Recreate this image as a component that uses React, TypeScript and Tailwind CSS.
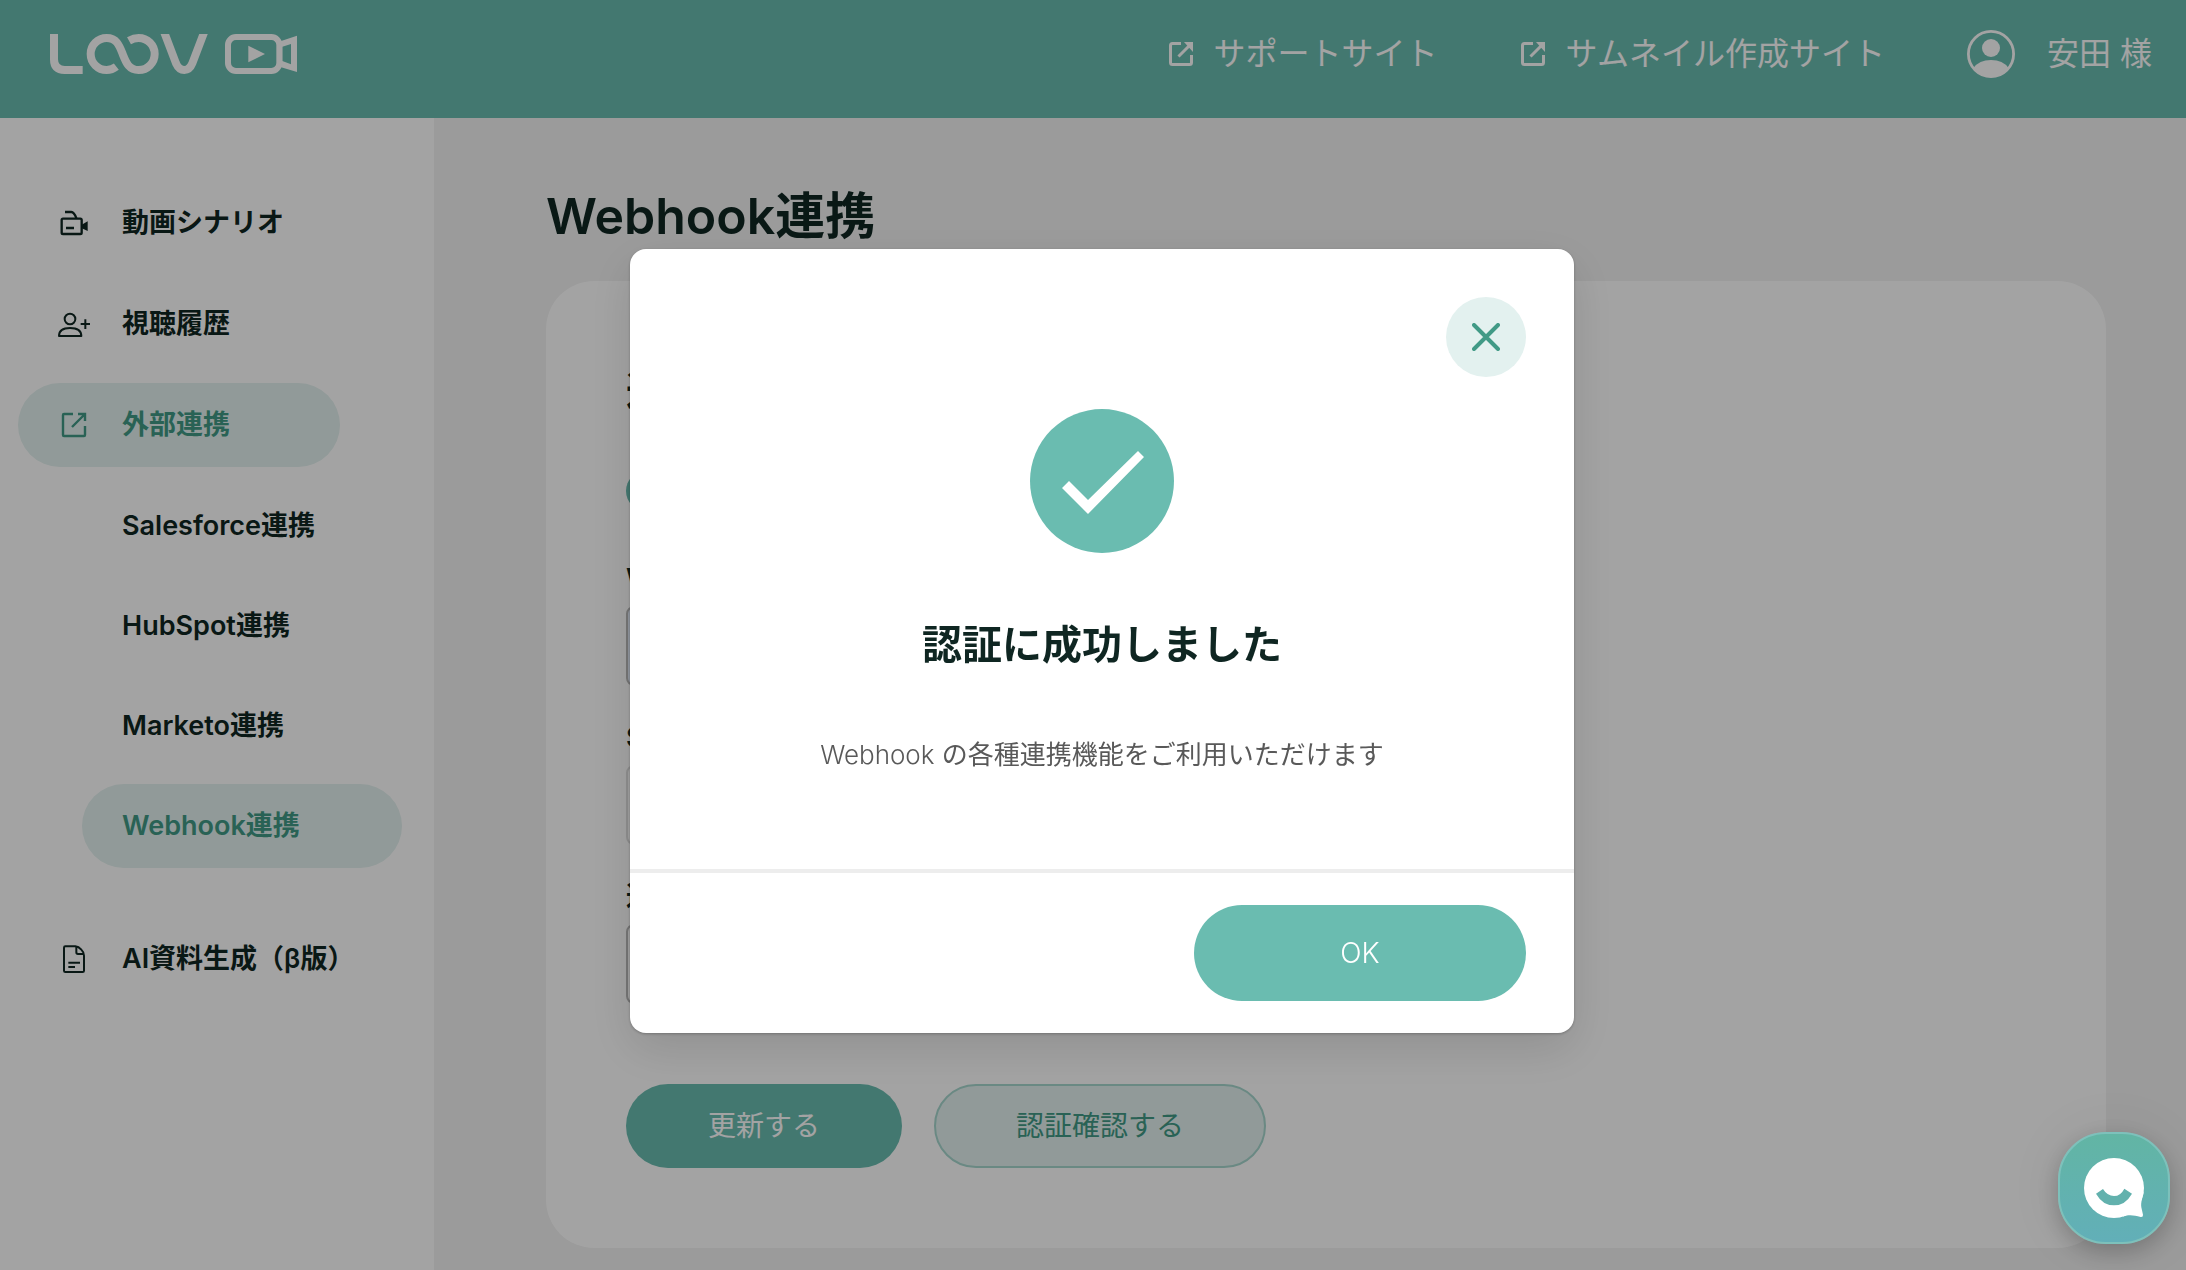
import { ReactNode } from "react"

const subItems = [
  { label: "Salesforce連携", active: false },
  { label: "HubSpot連携", active: false },
  { label: "Marketo連携", active: false },
  { label: "Webhook連携", active: true },
]

function Logo() {
  return (
    <svg viewBox="150 102 741 120" className="w-[247px] h-10" fill="none" stroke="white" strokeWidth="24" role="img" aria-label="LOOV">
      <path d="M162 98V178Q162 210 194 210H248" />
      <path d="M349 200C340 207 330 210 320 210A48 48 0 0 1 320 114C350 114 358 137 368 162C378 187 386 210 416 210A48 48 0 0 0 416 114C405 114 396 117 387 122" />
      <path d="M493 98L528 190Q537 210 553 210Q569 210 577 190L612 98" />
      <rect x="684" y="111" width="154" height="102" rx="24" strokeWidth="18" />
      <path d="M745 137L795 162L745 187Z" fill="white" stroke="none" />
      <path fillRule="evenodd" d="M841 124L891 107V216L841 201ZM847 140V183L873 193V132Z" fill="white" stroke="none" />
    </svg>
  )
}

function SiteLinkIcon() {
  return (
    <svg viewBox="-3 -4 32 32" className="w-8 h-8 shrink-0" fill="none" stroke="currentColor" strokeWidth="3">
      <path d="M12 1.5H3.5Q1.5 1.5 1.5 3.5V20.5Q1.5 22.5 3.5 22.5H20.5Q22.5 22.5 22.5 20.5V13" />
      <path d="M9.5 14.5L20 4" />
      <path d="M15 0H24V10Z" fill="currentColor" stroke="none" />
    </svg>
  )
}

function VideoIcon() {
  return (
    <svg viewBox="0 0 96 96" className="w-8 h-8 shrink-0" fill="none" stroke="currentColor" strokeWidth="7">
      <rect x="11" y="35" width="60" height="46" rx="4" />
      <path d="M21 15H40Q44 15 47 19Q53 26 55 34M24 63H48" />
      <path d="M70 54L89 43V72L70 63Z" fill="currentColor" stroke="none" />
    </svg>
  )
}

function ViewerIcon() {
  return (
    <svg viewBox="0 0 96 96" className="w-8 h-8 shrink-0" fill="none" stroke="currentColor" strokeWidth="6">
      <circle cx="36" cy="33" r="16" />
      <path d="M3 84Q3 60 36 60Q70 60 70 84Z" strokeLinejoin="round" />
      <path d="M82 34V63M68 48H96" />
    </svg>
  )
}

function ExternalIcon() {
  return (
    <svg viewBox="-4 -4 32 32" className="w-8 h-8 shrink-0" fill="none" stroke="currentColor" strokeWidth="2.4">
      <path d="M11 1H2Q1 1 1 2V22Q1 23 2 23H22Q23 23 23 22V13" />
      <path d="M16 1H23V8M10 14L23 1" />
    </svg>
  )
}

function DocumentIcon() {
  return (
    <svg viewBox="0 0 96 96" className="w-8 h-8 shrink-0" fill="none" stroke="currentColor" strokeWidth="6">
      <path d="M22 10H52Q62 11 70 20Q78 28 78 38V83Q78 87 74 87H22Q18 87 18 83V14Q18 10 22 10Z" />
      <path d="M55 11V28Q55 33 60 33H77M31 59H66M31 72H51" />
    </svg>
  )
}

function NavItem({ icon, label, active }: { icon: ReactNode; label: string; active?: boolean }) {
  return (
    <a
      href="#"
      className={`flex items-center gap-8 h-21 w-[322px] pl-10 rounded-full whitespace-nowrap ${
        active ? "bg-[#e3f1ef] text-[#419a86]" : ""
      }`}
    >
      {icon}
      {label}
    </a>
  )
}

function Field({ id, label, value, className }: { id: string; label: string; value?: string; className: string }) {
  return (
    <div>
      <label htmlFor={id} className="block mb-[7px] text-[27px] leading-10 font-semibold">
        {label}
      </label>
      <input id={id} defaultValue={value} className={`block w-[860px] h-20 px-6 text-[26px] rounded-lg border-2 ${className}`} />
    </div>
  )
}

function SuccessModal() {
  return (
    <div className="fixed inset-0 z-10 flex items-center justify-center pl-[18px] pt-3 bg-black/36">
      <div
        role="dialog"
        aria-modal="true"
        aria-labelledby="modal-title"
        className="w-[944px] rounded-2xl bg-white shadow-[0_1px_3px_rgba(0,0,0,0.25),0_16px_48px_rgba(0,0,0,0.12)]"
      >
        <div className="flex flex-col items-center px-12 pt-12 pb-[94px]">
          <button aria-label="閉じる" className="self-end w-20 h-20 rounded-full bg-[#e3f1ef] flex items-center justify-center">
            <svg viewBox="0 0 28 28" className="w-7 h-7" stroke="#419a86" strokeWidth="4" strokeLinecap="round">
              <path d="M2 2L26 26M26 2L2 26" />
            </svg>
          </button>
          <svg viewBox="0 0 144 144" className="mt-8 w-36 h-36">
            <circle cx="72" cy="72" r="72" fill="#6abcb0" />
            <path d="M32 79L39 72L58 91L108 42L114 48L58 105Z" fill="white" />
          </svg>
          <h2 id="modal-title" className="mt-16 text-[40px] leading-14 font-bold">
            認証に成功しました
          </h2>
          <p className="mt-[62px] text-[26px] leading-10 text-[#595959]">
            <span className="font-light">Webhook</span> の各種連携機能をご利用いただけます
          </p>
        </div>
        <div className="flex justify-end border-t-4 border-[#ededed] pt-8 pb-8 pr-12">
          <button className="w-[332px] h-24 rounded-full bg-[#6abcb0] text-white text-[28px] font-light">OK</button>
        </div>
      </div>
    </div>
  )
}

function ChatButton() {
  return (
    <button
      aria-label="チャット"
      className="fixed right-4 bottom-[26px] z-20 w-28 h-28 rounded-[48px] border-2 border-[#7dc1bb] bg-linear-to-b from-[#62b5a4] to-[#62afb8] flex items-center justify-center shadow-[0_8px_24px_rgba(0,0,0,0.22),0_0_60px_rgba(0,0,0,0.06)]"
    >
      <svg viewBox="0 0 180 180" className="w-15 h-15">
        <circle cx="90" cy="90" r="90" fill="white" />
        <path d="M179 100C176 120 170 132 172 148L177 170Q178 178 170 177C150 172 136 169 116 176Z" fill="white" />
        <path d="M36 107L57 93Q70 114 90 114Q110 114 121 92L144 107Q124 142 90 142Q56 142 36 107Z" fill="#62b1ad" />
      </svg>
    </button>
  )
}

export default function App() {
  return (
    <div className="min-h-screen flex flex-col bg-[#f2f2f2] text-[#0f2622] font-[Inter,'Noto_Sans_CJK_JP',sans-serif]">
      <header className="h-[118px] shrink-0 bg-[#6abcb0] text-white text-[32px] leading-12 flex justify-between pl-[50px] pr-[34px] pb-[10px] items-center">
        <Logo />
        <div className="flex items-center gap-20">
          <a href="#" className="flex items-center gap-4">
            <SiteLinkIcon />
            サポートサイト
          </a>
          <a href="#" className="flex items-center gap-4">
            <SiteLinkIcon />
            サムネイル作成サイト
          </a>
          <button className="flex items-center gap-8 ml-0.5">
            <svg viewBox="0 0 48 48" className="w-12 h-12" fill="white">
              <circle cx="24" cy="24" r="22.6" fill="none" stroke="white" strokeWidth="2.8" />
              <circle cx="24" cy="18" r="9" />
              <path d="M6.5 38Q12 30 24 30Q36 30 41.5 38Q35 47 24 47Q13 47 6.5 38Z" />
            </svg>
            安田 様
          </button>
        </div>
      </header>

      <div className="flex flex-1">
        <nav className="w-[434px] shrink-0 bg-white pt-[63px] pl-[18px] text-[27px] font-semibold">
          <ul className="flex flex-col gap-[17px]">
            <li>
              <NavItem icon={<VideoIcon />} label="動画シナリオ" />
            </li>
            <li>
              <NavItem icon={<ViewerIcon />} label="視聴履歴" />
            </li>
            <li>
              <NavItem icon={<ExternalIcon />} label="外部連携" active />
              <ul className="flex flex-col gap-4 mt-[17px] mb-8 ml-16">
                {subItems.map((item) => (
                  <li key={item.label}>
                    <a
                      href="#"
                      className={`flex items-center h-21 w-80 pl-10 rounded-full ${
                        item.active ? "bg-[#e3f1ef] text-[#419a86]" : ""
                      }`}
                    >
                      {item.label}
                    </a>
                  </li>
                ))}
              </ul>
            </li>
            <li>
              <NavItem icon={<DocumentIcon />} label="AI資料生成（β版）" />
            </li>
          </ul>
        </nav>

        <main className="flex-1 pt-[62px] pl-28 pr-20 pb-[22px]">
          <h1 className="mb-[29px] text-[50px] leading-18 font-semibold">Webhook連携</h1>
          <section className="rounded-[48px] bg-white p-20">
            <h2 className="text-[40px] leading-15 font-semibold">連携設定</h2>
            <input
              type="checkbox"
              defaultChecked
              aria-label="連携を有効にする"
              className="block appearance-none mt-[50px] mb-12 w-20 h-10 rounded-full bg-[#6abcb0]"
            />
            <div className="flex flex-col gap-8">
              <Field id="url" label="Webhook URL" className="bg-[#e8f0fe] border-[#b8b8b8]" />
              <Field id="secret" label="Secret" className="bg-white border-[#dedede]" />
              <Field id="target" label="連携先" className="bg-white border-[#b8b8b8]" />
            </div>
            <div className="flex gap-8 mt-20 text-[28px]">
              <button className="w-[276px] h-21 rounded-full bg-[#6abcb0] text-white">更新する</button>
              <button className="w-[332px] h-21 rounded-full border-2 border-[#a6d6ce] bg-[#e3f1ef] text-[#419a86]">
                認証確認する
              </button>
            </div>
          </section>
        </main>
      </div>

      <SuccessModal />
      <ChatButton />
    </div>
  )
}
